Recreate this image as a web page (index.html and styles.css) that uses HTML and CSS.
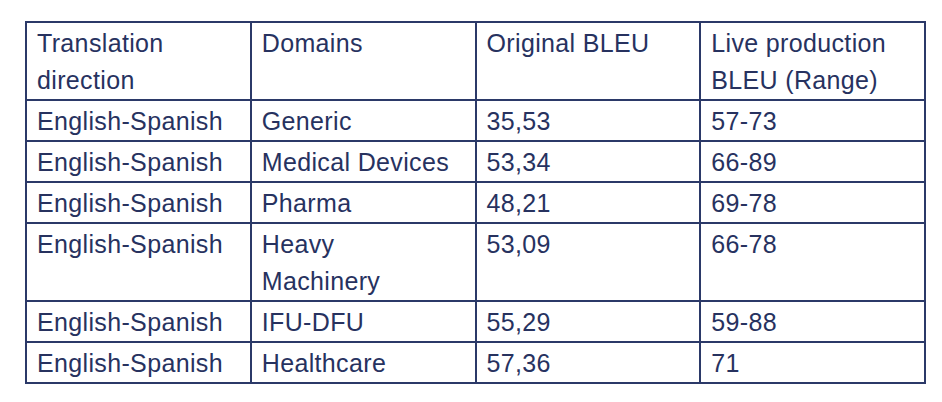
FILE: index.html
```html
<!DOCTYPE html>
<html lang="en">
<head>
<meta charset="utf-8">
<title>BLEU table</title>
<link rel="stylesheet" href="styles.css">
</head>
<body>
<table class="bleu">
  <colgroup><col><col><col><col></colgroup>
  <tr><td>Translation direction</td><td>Domains</td><td>Original BLEU</td><td>Live production BLEU (Range)</td></tr>
  <tr><td>English-Spanish</td><td>Generic</td><td>35,53</td><td>57-73</td></tr>
  <tr><td>English-Spanish</td><td>Medical Devices</td><td>53,34</td><td>66-89</td></tr>
  <tr><td>English-Spanish</td><td>Pharma</td><td>48,21</td><td>69-78</td></tr>
  <tr><td>English-Spanish</td><td>Heavy Machinery</td><td>53,09</td><td>66-78</td></tr>
  <tr><td>English-Spanish</td><td>IFU-DFU</td><td>55,29</td><td>59-88</td></tr>
  <tr><td>English-Spanish</td><td>Healthcare</td><td>57,36</td><td>71</td></tr>
</table>
</body>
</html>
```
FILE: styles.css
```css
html, body {
  margin: 0;
  padding: 0;
  background: #ffffff;
}
body {
  padding: 21px 0 0 25px;
  font-family: "Liberation Sans", Arial, sans-serif;
  color: #27325f;
}
.bleu {
  border-collapse: separate;
  border-spacing: 0;
  table-layout: fixed;
  width: 901px;
  border-top: 2px solid #2b3968;
  border-left: 2px solid #2b3968;
}
.bleu td {
  border-right: 2px solid #2b3968;
  border-bottom: 2px solid #2b3968;
  padding: 2px 20px 0 10px;
  font-size: 25px;
  line-height: 37px;
  letter-spacing: 0.35px;
  vertical-align: top;
  text-align: left;
}
```
